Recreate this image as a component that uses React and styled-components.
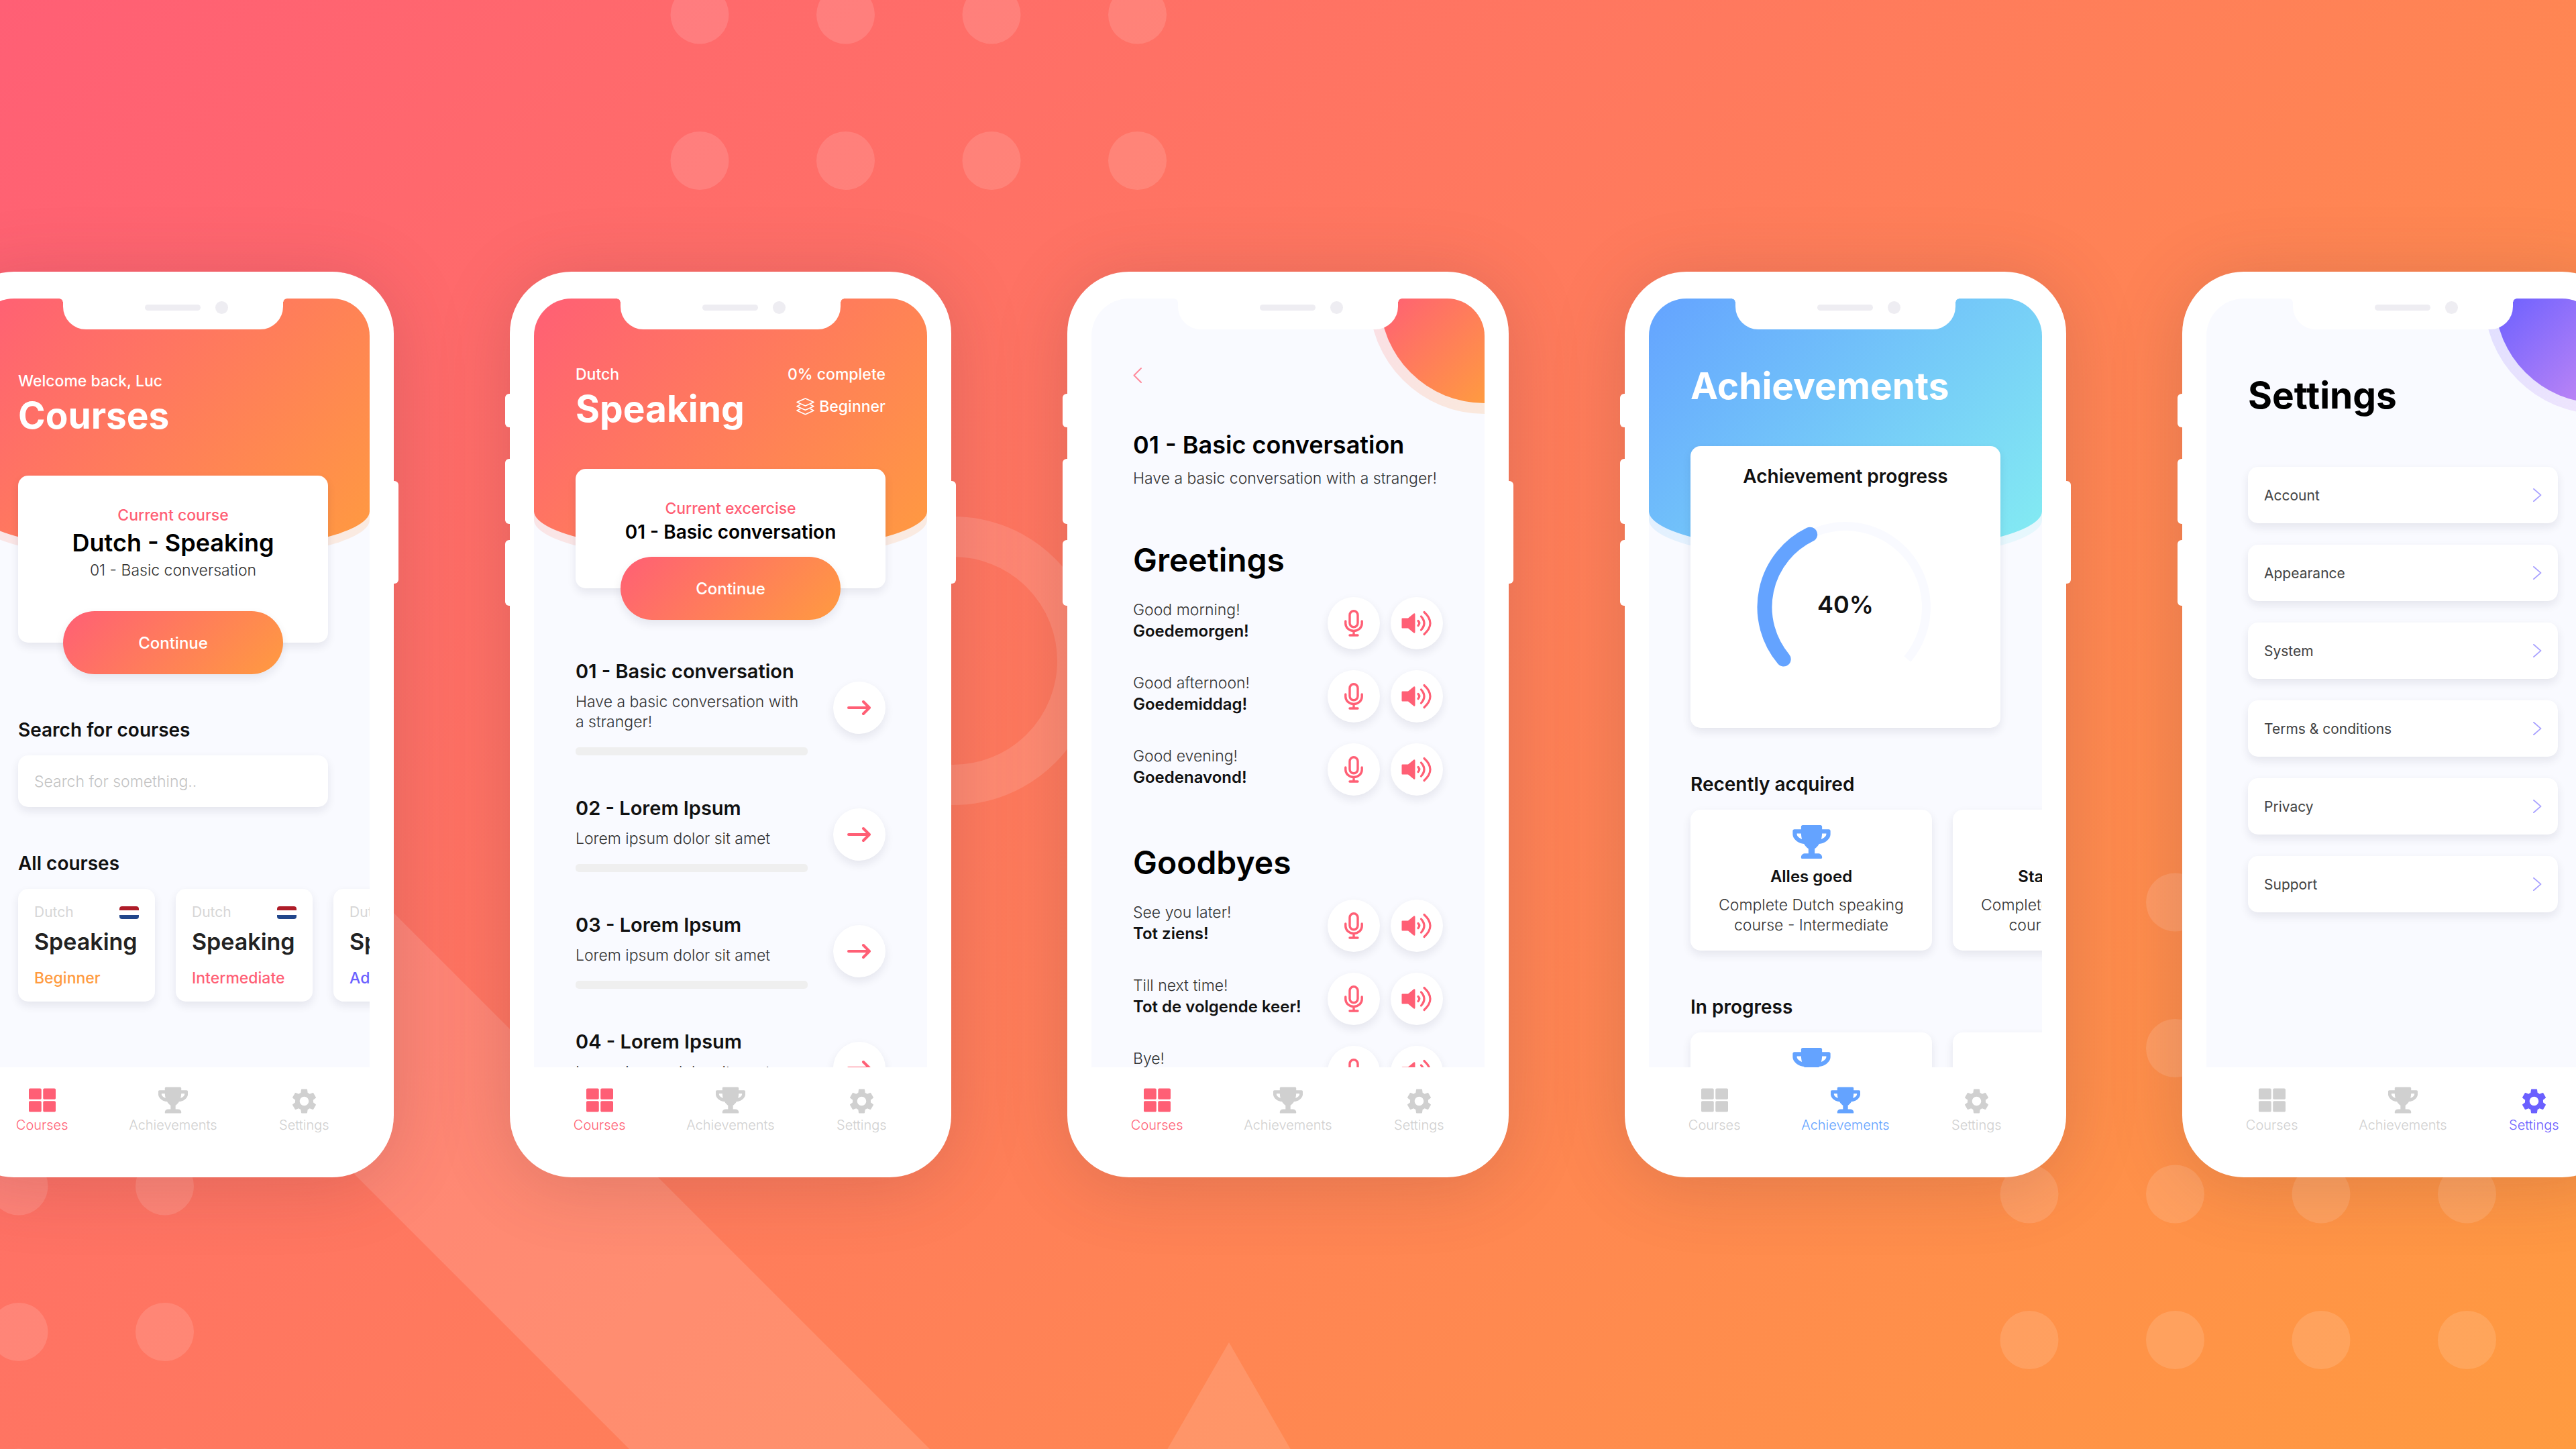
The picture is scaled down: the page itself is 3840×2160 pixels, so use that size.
import React from "react";
import styled, { createGlobalStyle } from "styled-components";
import { FaThLarge, FaTrophy } from "react-icons/fa";
import { MdSettings } from "react-icons/md";

const pink = "#ff5f75";
const orange = "#ff9b40";
const blue = "#64a3ff";
const violet = "#6b60ff";
const sunset = `linear-gradient(135deg, ${pink} 0%, ${orange} 100%)`;
const lagoon = `linear-gradient(135deg, ${blue} 0%, #84edf2 100%)`;
const dusk = `linear-gradient(135deg, ${violet} 0%, #c488f4 100%)`;
const softShadow = "0 6px 14px rgba(20, 20, 50, 0.09)";

const GlobalStyle = createGlobalStyle`
  *, *::before, *::after { box-sizing: border-box; }
  body {
    margin: 0;
    font-family: Inter, "Liberation Sans", sans-serif;
    color: #000;
  }
  h1, h2, h3, p, ul { margin: 0; padding: 0; }
  ul { list-style: none; }
  button, input { font: inherit; color: inherit; border: 0; padding: 0; background: none; }
  svg { display: block; }
`;

const Stage = styled.main`
  position: relative;
  display: flex;
  align-items: center;
  justify-content: center;
  gap: 173px;
  min-height: 100vh;
  overflow: hidden;
  background: ${sunset};
`;

const Backdrop = styled.svg`
  position: absolute;
  inset: 0;
  width: 100%;
  height: 100%;
  fill: rgba(255, 255, 255, 0.13);
`;

/* Device */

const Frame = styled.section`
  position: relative;
  flex: none;
  display: flex;
  flex-direction: column;
  width: 658px;
  height: 1350px;
  padding: 40px 36px 0;
  border-radius: 92px;
  background: #fff;
  box-shadow: 0 10px 110px rgba(90, 50, 60, 0.2);
`;

const SideKey = styled.span`
  position: absolute;
  ${(p) => (p.$right ? "right: -7px;" : "left: -7px;")}
  top: ${(p) => p.$top}px;
  width: 14px;
  height: ${(p) => p.$length}px;
  border-radius: 6px;
  background: #fff;
`;

const Screen = styled.div`
  position: relative;
  display: flex;
  flex-direction: column;
  height: 1146px;
  padding: ${(p) => p.$top}px 62px 0;
  overflow: hidden;
  border-radius: 56px 56px 0 0;
  background: #f9faff;
`;

const Notch = styled.div`
  position: absolute;
  z-index: 2;
  top: 0;
  left: 50%;
  width: 328px;
  height: 46px;
  margin-left: -164px;
  border-radius: 0 0 34px 34px;
  background: #fff;

  &::before,
  &::after {
    content: "";
    position: absolute;
    top: 0;
    width: 5px;
    height: 5px;
  }
  &::before {
    right: 100%;
    background: radial-gradient(circle at 0 100%, transparent 4px, #fff 5px);
  }
  &::after {
    left: 100%;
    background: radial-gradient(circle at 100% 100%, transparent 4px, #fff 5px);
  }
`;

const Sensors = styled.div`
  display: flex;
  align-items: center;
  gap: 22px;
  padding: 4px 0 0 122px;
`;

const Earpiece = styled.span`
  width: 83px;
  height: 9px;
  border-radius: 5px;
  background: #eeedf2;
`;

const Lens = styled.span`
  width: 19px;
  height: 19px;
  border-radius: 50%;
  background: #eeedf2;
`;

const Hood = styled.div`
  position: absolute;
  top: 0;
  left: 0;
  right: 0;
  height: ${(p) => (p.$halo ? 392 : 379)}px;
  border-radius: 0 0 50% 50% / 0 0 62px 62px;
  background: ${(p) => p.$fill};
  opacity: ${(p) => (p.$halo ? 0.16 : 1)};
`;

const Corner = styled.div`
  position: absolute;
  top: 0;
  right: 0;
  width: ${(p) => (p.$halo ? 172 : 156)}px;
  aspect-ratio: 1;
  border-bottom-left-radius: 100%;
  background: ${(p) => p.$fill};
  opacity: ${(p) => (p.$halo ? 0.18 : 1)};
`;

const Body = styled.div`
  position: relative;
  display: flex;
  flex-direction: column;
`;

const TabBar = styled.nav`
  display: flex;
  padding-top: 28px;
`;

const Tab = styled.button`
  flex: 1;
  display: flex;
  flex-direction: column;
  align-items: center;
  gap: 4px;
  font-size: 20px;
  line-height: 24px;
  font-weight: 300;
  color: ${(p) => p.$color};
`;

const TabIcon = styled.span`
  display: grid;
  place-items: center;
  height: 42px;
`;

/* Type */

const Title = styled.h1`
  font-size: ${(p) => (p.$small ? 36 : 55)}px;
  line-height: ${(p) => (p.$small ? 44 : 64)}px;
  font-weight: ${(p) => (p.$small ? 600 : 700)};
  color: ${(p) => p.$color || "#000"};
`;

const Heading = styled.h2`
  font-size: 48px;
  line-height: 58px;
  font-weight: 600;
`;

const Label = styled.h2`
  font-size: ${(p) => (p.$large ? 29 : 28)}px;
  line-height: 36px;
  font-weight: 600;
  color: #111;
`;

const Text = styled.p`
  font-size: ${(p) => (p.$large ? 24 : 23)}px;
  line-height: ${(p) => p.$line || 30}px;
  font-weight: ${(p) => p.$weight || 400};
  color: ${(p) => p.$color || "#333"};
`;

/* Parts */

const HeroHead = styled.header`
  display: flex;
  justify-content: space-between;
  margin-bottom: 58px;
`;

const HeroText = styled.div`
  display: flex;
  flex-direction: column;
  gap: ${(p) => p.$gap || 4}px;
  align-items: ${(p) => (p.$end ? "flex-end" : "flex-start")};
`;

const LevelTag = styled.div`
  display: flex;
  align-items: center;
  gap: 7px;
`;

const Card = styled.div`
  border-radius: 15px;
  background: #fff;
  box-shadow: ${softShadow};
`;

const CurrentCard = styled(Card)`
  display: flex;
  flex-direction: column;
  align-items: center;
  gap: 4px;
  padding-top: 44px;
`;

const CardTitle = styled.h2`
  font-size: ${(p) => (p.$large ? 36 : 28)}px;
  line-height: ${(p) => (p.$large ? 44 : 32)}px;
  font-weight: 600;
`;

const Continue = styled.button`
  width: 328px;
  height: 94px;
  margin: ${(p) => p.$gap}px 0 -47px;
  border-radius: 47px;
  background: ${sunset};
  box-shadow: ${softShadow};
  font-size: 24px;
  font-weight: 500;
  color: #fff;
`;

const Section = styled.section`
  display: flex;
  flex-direction: column;
  gap: 20px;
  margin-top: ${(p) => p.$top || 66}px;
`;

const SearchBox = styled.input`
  width: 100%;
  height: 77px;
  padding: 0 24px;
  border-radius: 15px;
  background: #fff;
  box-shadow: ${softShadow};
  font-size: 23px;
  font-weight: 300;

  &::placeholder {
    color: #c4c4c4;
    opacity: 1;
  }
`;

const Shelf = styled.ul`
  display: flex;
  gap: 31px;
`;

const CourseCard = styled(Card).attrs({ as: "li" })`
  flex: none;
  display: flex;
  flex-direction: column;
  width: 204px;
  padding: 22px 24px 20px;
`;

const CourseTop = styled.div`
  display: flex;
  align-items: center;
  justify-content: space-between;
  font-size: 21px;
  line-height: 26px;
  color: #d6d6d6;
`;

const Flag = styled.span`
  width: 29px;
  height: 19px;
  border-radius: 4px;
  background: linear-gradient(#ae1c28 0 33%, #fff 33% 67%, #21468b 67%);
`;

const CourseName = styled.h3`
  margin: 10px 0 18px;
  font-size: 34px;
  line-height: 42px;
  font-weight: 600;
  color: #222;
`;

const Lessons = styled.ul`
  display: flex;
  flex-direction: column;
  gap: 61px;
  margin-top: 106px;
`;

const Lesson = styled.li`
  display: flex;
  align-items: center;
  justify-content: space-between;
`;

const LessonText = styled.div`
  display: flex;
  flex-direction: column;
  gap: 12px;
  width: 346px;
`;

const Track = styled.div`
  height: 12px;
  margin-top: 11px;
  border-radius: 5px;
  background: #efefef;
`;

const Round = styled.button`
  display: grid;
  place-items: center;
  width: 78px;
  height: 78px;
  border-radius: 50%;
  background: #fff;
  box-shadow: ${softShadow};
`;

const Back = styled.button`
  align-self: flex-start;
  margin-bottom: 70px;
`;

const Intro = styled.div`
  display: flex;
  flex-direction: column;
  gap: 13px;
  margin-bottom: 78px;
  white-space: nowrap;
`;

const Phrases = styled.section`
  display: flex;
  flex-direction: column;
  gap: 26px;
  margin-bottom: 71px;
`;

const PhraseList = styled.ul`
  display: flex;
  flex-direction: column;
  gap: 31px;
`;

const Phrase = styled.li`
  display: flex;
  align-items: center;
  justify-content: space-between;
`;

const PhraseText = styled.div`
  padding-bottom: 8px;
`;

const Actions = styled.div`
  display: flex;
  gap: 16px;
`;

const ProgressCard = styled(Card)`
  display: flex;
  flex-direction: column;
  align-items: center;
  gap: 45px;
  padding: 27px 0 48px;
`;

const Gauge = styled.div`
  display: grid;
  place-items: center;

  & > * {
    grid-area: 1 / 1;
  }
`;

const Percent = styled.strong`
  padding-bottom: 8px;
  font-size: 36px;
  line-height: 44px;
  font-weight: 600;
  color: #111;
`;

const Award = styled(Card).attrs({ as: "li" })`
  flex: none;
  display: flex;
  flex-direction: column;
  align-items: center;
  gap: 12px;
  width: 360px;
  padding: 23px 36px;
  text-align: center;
`;

const SettingsList = styled.ul`
  display: flex;
  flex-direction: column;
  gap: 32px;
  margin-top: 75px;
`;

const SettingsRow = styled.button`
  display: flex;
  align-items: center;
  justify-content: space-between;
  width: 100%;
  height: 84px;
  padding: 0 24px;
  border-radius: 15px;
  background: #fff;
  box-shadow: ${softShadow};
  font-size: 21px;
  font-weight: 400;
  color: #444;
`;

/* Drawings */

const Chevron = ({ color, back, height }) => (
  <svg width="13" height={height} viewBox="0 0 13 23" fill="none" stroke={color} strokeWidth="2" strokeLinecap="round" strokeLinejoin="round" preserveAspectRatio="none">
    <path d={back ? "M12 1 1.5 11.5 12 22" : "M1 1 11.5 11.5 1 22"} />
  </svg>
);

const Arrow = () => (
  <svg width="36" height="24" viewBox="0 0 36 24" fill="none" stroke={pink} strokeWidth="4" strokeLinecap="round" strokeLinejoin="round">
    <path d="M2 12h31M24 3l9 9-9 9" />
  </svg>
);

const Layers = () => (
  <svg width="27" height="26" viewBox="0 0 27 26" fill="none" stroke="#fff" strokeWidth="1.6" strokeLinejoin="round" strokeLinecap="round">
    <path d="M13.500 1 26 6.500 13.500 12 1 6.500z" />
    <path d="M5.500 10.500 1 12.700 13.500 18.300 26 12.700 21.500 10.500" />
    <path d="M5.500 16.800 1 19 13.500 24.800 26 19 21.500 16.800" />
  </svg>
);

const Mic = () => (
  <svg width="28" height="40" viewBox="0 0 28 40" fill="none" stroke={pink} strokeWidth="3.400" strokeLinecap="round">
    <rect x="8" y="1.700" width="12" height="24" rx="6" />
    <path d="M1.800 17v3.500a12.200 11 0 0 0 24.400 0V17M14 32v6M8 38h12" />
  </svg>
);

const Speaker = () => (
  <svg width="46" height="38" viewBox="0 0 46 38" fill="none" stroke={pink} strokeWidth="3.200" strokeLinecap="round">
    <path d="M1.500 11.500H10L18.500 4.500Q20.500 3.500 20.500 6V32Q20.500 34.500 18.500 33.500L10 26.500H1.500Q.5 26.500.5 25.500V12.500Q.5 11.500 1.500 11.500z" fill={pink} stroke="none" />
    <path d="M25 15.500q3.500 3.500 0 7M29.500 9q9 10 0 20M34 2.500q18 16.500 0 33" />
  </svg>
);

const ArcMeter = () => (
  <svg width="264" height="264" viewBox="0 0 264 264" fill="none">
    <path d="M39.690 209.460A120.500 120.500 0 1 1 224.310 209.460" stroke="#f9faff" strokeWidth="13" />
    <path d="M39.690 209.460A120.500 120.500 0 0 1 79.180 23.700" stroke={blue} strokeWidth="22" strokeLinecap="round" />
  </svg>
);

/* Assemblies */

const tabs = [
  { name: "Courses", icon: <FaThLarge size={40} /> },
  { name: "Achievements", icon: <FaTrophy size={40} style={{ width: 44 }} /> },
  { name: "Settings", icon: <MdSettings size={45} /> },
];

function Phone({ label, top, active, accent, backdrop, children }) {
  return (
    <Frame aria-label={label}>
      <SideKey $top={182} $length={50} />
      <SideKey $top={279} $length={97} />
      <SideKey $top={400} $length={98} />
      <SideKey $right $top={312} $length={153} />
      <Screen $top={top}>
        {backdrop}
        <Notch>
          <Sensors>
            <Earpiece />
            <Lens />
          </Sensors>
        </Notch>
        <Body>{children}</Body>
      </Screen>
      <TabBar aria-label={`${label} tabs`}>
        {tabs.map((tab) => (
          <Tab key={tab.name} type="button" $color={tab.name === active ? accent : "#d0d0d0"}>
            <TabIcon>{tab.icon}</TabIcon>
            {tab.name}
          </Tab>
        ))}
      </TabBar>
    </Frame>
  );
}

const HoodBackdrop = ({ fill }) => (
  <>
    <Hood $fill={fill} $halo />
    <Hood $fill={fill} />
  </>
);

const CornerBackdrop = ({ fill }) => (
  <>
    <Corner $fill={fill} $halo />
    <Corner $fill={fill} />
  </>
);

const courses = [
  { level: "Beginner", color: orange },
  { level: "Intermediate", color: pink },
  { level: "Advanced", color: violet },
];

const lessons = [
  { title: "01 - Basic conversation", text: "Have a basic conversation with a stranger!" },
  { title: "02 - Lorem Ipsum", text: "Lorem ipsum dolor sit amet" },
  { title: "03 - Lorem Ipsum", text: "Lorem ipsum dolor sit amet" },
  { title: "04 - Lorem Ipsum", text: "Lorem ipsum dolor sit amet" },
];

const phrases = [
  {
    heading: "Greetings",
    rows: [
      ["Good morning!", "Goedemorgen!"],
      ["Good afternoon!", "Goedemiddag!"],
      ["Good evening!", "Goedenavond!"],
    ],
  },
  {
    heading: "Goodbyes",
    rows: [
      ["See you later!", "Tot ziens!"],
      ["Till next time!", "Tot de volgende keer!"],
      ["Bye!", "Doei!"],
    ],
  },
];

const awards = [
  { name: "Alles goed", text: "Complete Dutch speaking course - Intermediate" },
  { name: "Star translator", text: "Complete Dutch speaking course - Beginner" },
];

const settings = ["Account", "Appearance", "System", "Terms & conditions", "Privacy", "Support"];

const dotGrids = [
  { x: 1043, y: 22, columns: 4, rows: 2 },
  { x: 28, y: 1768, columns: 2, rows: 3 },
  { x: 3025, y: 1345, columns: 4, rows: 4 },
];

function Decoration() {
  const dots = dotGrids.flatMap((grid) =>
    Array.from({ length: grid.columns * grid.rows }, (_, i) => ({
      x: grid.x + (i % grid.columns) * 217.500,
      y: grid.y + Math.floor(i / grid.columns) * 217.500,
    }))
  );
  return (
    <Backdrop viewBox="0 0 3840 2160" preserveAspectRatio="xMidYMid slice" aria-hidden="true">
      {dots.map((dot) => (
        <circle key={`${dot.x}-${dot.y}`} cx={dot.x} cy={dot.y} r="43.500" />
      ))}
      <path d="M200 974 1386 2160H938L100 1322z" />
      <path d="M1832 2001 1934 2178H1730z" />
      <circle cx="1421" cy="985" r="185" fill="none" stroke="rgba(255, 255, 255, 0.130)" strokeWidth="60" />
    </Backdrop>
  );
}

const AwardShelf = () => (
  <Shelf>
    {awards.map((award) => (
      <Award key={award.name}>
        <FaTrophy color={blue} size={50} style={{ width: 57 }} />
        <Text as="h3" $large $weight={600} $color="#111">
          {award.name}
        </Text>
        <Text $weight={300}>{award.text}</Text>
      </Award>
    ))}
  </Shelf>
);

export default function App() {
  return (
    <>
      <GlobalStyle />
      <Stage>
        <Decoration />

        <Phone label="Courses" top={108} active="Courses" accent={pink} backdrop={<HoodBackdrop fill={sunset} />}>
          <HeroHead>
            <HeroText>
              <Text $weight={500} $color="#fff">Welcome back, Luc</Text>
              <Title $color="#fff">Courses</Title>
            </HeroText>
          </HeroHead>
          <CurrentCard>
            <Text $weight={500} $color={pink}>Current course</Text>
            <CardTitle $large>Dutch - Speaking</CardTitle>
            <Text $weight={300}>01 - Basic conversation</Text>
            <Continue type="button" $gap={42}>Continue</Continue>
          </CurrentCard>
          <Section $top={112}>
            <Label as="label" htmlFor="course-search">Search for courses</Label>
            <SearchBox id="course-search" type="text" placeholder="Search for something.." />
          </Section>
          <Section>
            <Label>All courses</Label>
            <Shelf>
              {courses.map((course) => (
                <CourseCard key={course.level}>
                  <CourseTop>
                    Dutch
                    <Flag />
                  </CourseTop>
                  <CourseName>Speaking</CourseName>
                  <Text $weight={500} $color={course.color}>{course.level}</Text>
                </CourseCard>
              ))}
            </Shelf>
          </Section>
        </Phone>

        <Phone label="Course" top={98} active="Courses" accent={pink} backdrop={<HoodBackdrop fill={sunset} />}>
          <HeroHead>
            <HeroText>
              <Text $weight={500} $color="#fff">Dutch</Text>
              <Title $color="#fff">Speaking</Title>
            </HeroText>
            <HeroText $end $gap={18}>
              <Text $weight={500} $color="#fff">0% complete</Text>
              <LevelTag>
                <Layers />
                <Text $weight={500} $color="#fff">Beginner</Text>
              </LevelTag>
            </HeroText>
          </HeroHead>
          <CurrentCard>
            <Text $weight={500} $color={pink}>Current excercise</Text>
            <CardTitle>01 - Basic conversation</CardTitle>
            <Continue type="button" $gap={17}>Continue</Continue>
          </CurrentCard>
          <Lessons>
            {lessons.map((lesson) => (
              <Lesson key={lesson.title}>
                <LessonText>
                  <Label as="h3" $large>{lesson.title}</Label>
                  <Text $weight={300}>{lesson.text}</Text>
                  <Track />
                </LessonText>
                <Round type="button" aria-label={`Open ${lesson.title}`}>
                  <Arrow />
                </Round>
              </Lesson>
            ))}
          </Lessons>
        </Phone>

        <Phone label="Exercise" top={103} active="Courses" accent={pink} backdrop={<CornerBackdrop fill={sunset} />}>
          <Back type="button" aria-label="Back">
            <Chevron back color="#ff8a9b" height={23} />
          </Back>
          <Intro>
            <Title $small>01 - Basic conversation</Title>
            <Text $weight={300}>Have a basic conversation with a stranger!</Text>
          </Intro>
          {phrases.map((group) => (
            <Phrases key={group.heading}>
              <Heading>{group.heading}</Heading>
              <PhraseList>
                {group.rows.map(([source, target]) => (
                  <Phrase key={source}>
                    <PhraseText>
                      <Text $line={32} $weight={300}>{source}</Text>
                      <Text $large $line={32} $weight={600} $color="#111">{target}</Text>
                    </PhraseText>
                    <Actions>
                      <Round type="button" aria-label={`Record ${target}`}>
                        <Mic />
                      </Round>
                      <Round type="button" aria-label={`Play ${target}`}>
                        <Speaker />
                      </Round>
                    </Actions>
                  </Phrase>
                ))}
              </PhraseList>
            </Phrases>
          ))}
        </Phone>

        <Phone label="Achievements" top={98} active="Achievements" accent={blue} backdrop={<HoodBackdrop fill={lagoon} />}>
          <HeroHead>
            <Title $color="#fff">Achievements</Title>
          </HeroHead>
          <ProgressCard>
            <Label>Achievement progress</Label>
            <Gauge>
              <ArcMeter />
              <Percent>40%</Percent>
            </Gauge>
          </ProgressCard>
          <Section>
            <Label>Recently acquired</Label>
            <AwardShelf />
          </Section>
          <Section>
            <Label>In progress</Label>
            <AwardShelf />
          </Section>
        </Phone>

        <Phone label="Settings" top={112} active="Settings" accent={violet} backdrop={<CornerBackdrop fill={dusk} />}>
          <Title>Settings</Title>
          <SettingsList>
            {settings.map((name) => (
              <li key={name}>
                <SettingsRow type="button">
                  {name}
                  <Chevron color="#a8a1ff" height={20} />
                </SettingsRow>
              </li>
            ))}
          </SettingsList>
        </Phone>
      </Stage>
    </>
  );
}
